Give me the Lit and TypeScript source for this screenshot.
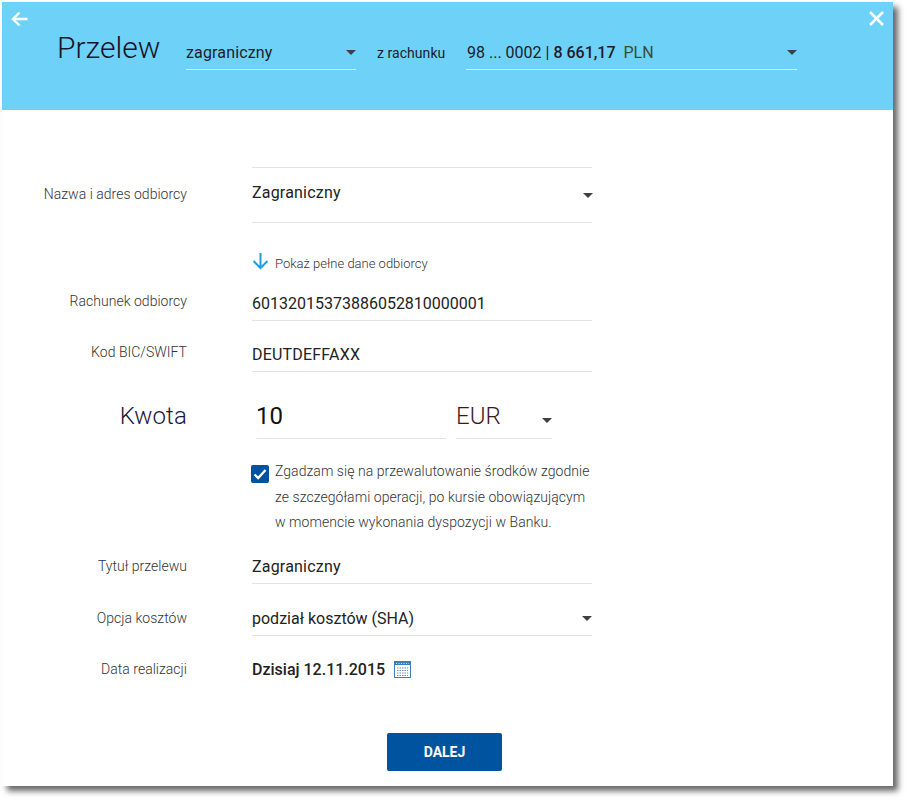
import { LitElement, html, css } from "lit";
import { customElement } from "lit/decorators.js";

const caret = html`<svg class="caret" width="10" height="5" viewBox="0 0 10 5"><path d="M0 0H10L5 5Z" fill="#3f3f46"/></svg>`;

@customElement("app-root")
export class AppRoot extends LitElement {
  static styles = css`
    :host { display: block; width: 907px; height: 800px; background: #fff; box-sizing: border-box; padding: 2px 14px 14px 2px; font-family: Roboto, "Noto Sans", sans-serif; color: #1c1c28; }
    * { box-sizing: border-box; }
    .panel { width: 891px; height: 784px; background: #fff; box-shadow: 5px 5px 6px rgba(0,0,0,.6); position: relative; }
    .head { height: 108px; background: #6ed2f8; display: flex; align-items: flex-start; padding: 27px 0 0 55px; position: relative; }
    .back { position: absolute; left: 9px; top: 9px; }
    .close { position: absolute; right: 8px; top: 8px; }
    h1 { margin: 0; font-size: 30px; font-weight: 300; line-height: 38px; width: 129px; color: #14142b; }
    .hsel { height: 41px; border-bottom: 1px solid #e6f6fd; display: flex; align-items: center; justify-content: space-between; font-size: 16px; padding: 7px 0 0 0; letter-spacing: .15px; }
    .kind { width: 170px; }
    .from { font-size: 14px; margin: 0 20px 0 21px; height: 40px; line-height: 48px; width: 69px; white-space: nowrap; letter-spacing: .05px; }
    .acct { width: 331px; padding-left: 1px; letter-spacing: 0; }
    .acct b { font-weight: 500; }
    .acct .cur { margin-left: 4px; color: #3d4a32; }
    .form { display: flex; flex-direction: column; padding-top: 57px; }
    .row { display: grid; grid-template-columns: 185px 340px; column-gap: 65px; }
    .lbl { font-size: 14px; font-weight: 300; color: #333; text-align: right; letter-spacing: .02px; }
    .field { font-size: 16px; border-bottom: 1px solid #e3e3e3; color: #222; }
    .spaced { letter-spacing: .2px; }
    .line { height: 34px; line-height: 33px; display: flex; justify-content: space-between; align-items: center; }
    .recipient { border-top: 1px solid #e3e3e3; height: 56px; display: flex; justify-content: space-between; align-items: center; padding: 0 0 5px 0; }
    .recipient .caret { margin: 5px -1px 0 0; }
    .recipient-lbl { line-height: 54px; }
    .show { display: flex; align-items: center; gap: 6px; font-size: 13px; font-weight: 300; color: #333; margin-top: 28px; height: 24px; }
    .rlbl { line-height: 28px; }
    .rlbl2 { line-height: 33px; }
    .account { margin-top: 12px; }
    .bic { margin-top: 17px; }
    .amount { margin-top: 17px; }
    .amount .big { font-size: 24px; font-weight: 300; color: #17173f; height: 50px; line-height: 54px; letter-spacing: .15px; }
    .amt { display: flex; gap: 10px; padding-left: 4px; }
    .amt > div { height: 50px; border-bottom: 1px solid #e3e3e3; font-size: 24px; line-height: 54px; display: flex; justify-content: space-between; }
    .val { width: 190px; color: #111; }
    .ccy { width: 96px; color: #3a1a1a; font-weight: 300; }
    .ccy .caret { margin-top: 29px; }
    .agree { display: flex; gap: 6px; margin: 20px 0 0 -1px; font-size: 14px; font-weight: 300; line-height: 25.5px; color: #333; letter-spacing: .05px; }
    .agree p { margin: 0; white-space: nowrap; }
    .box { width: 18px; height: 18px; margin-top: 6px; flex: none; background: #00539f; border-radius: 2px; display: flex; align-items: center; justify-content: center; }
    .title { margin-top: 14px; }
    .cost { margin-top: 18px; }
    .date { margin-top: 17px; height: 34px; line-height: 34px; }
    .datev { display: flex; align-items: center; gap: 9px; font-size: 16px; font-weight: 500; color: #222; }
    .date .lbl { line-height: 33px; }
    .foot { display: flex; justify-content: center; margin-top: 46px; padding-right: 6px; }
    button { width: 115px; height: 38px; background: #00539f; color: #fff; border: 0; border-radius: 2px; font: 700 14px Roboto, sans-serif; }
    .arrow { flex: none; margin-top: -4px; }
  `;
  render() {
    return html`<div class="panel">
      <div class="head">
        <svg class="back" width="18" height="16" viewBox="0 0 18 16"><path d="M16.5 8H2M8.5 1.5L2 8l6.5 6.5" fill="none" stroke="#fff" stroke-width="2.4"/></svg>
        <svg class="close" width="17" height="17" viewBox="0 0 17 17"><path d="M2 2l13 13M15 2L2 15" fill="none" stroke="#fff" stroke-width="2.6"/></svg>
        <h1>Przelew</h1>
        <div class="hsel kind"><span>zagraniczny</span>${caret}</div>
        <div class="from">z rachunku</div>
        <div class="hsel acct"><span>98 ... 0002 | <b>8 661,17</b> <span class="cur">PLN</span></span>${caret}</div>
      </div>
      <div class="form">
        <div class="row"><div class="lbl recipient-lbl">Nazwa i adres odbiorcy</div><div class="field recipient"><span class="spaced">Zagraniczny</span>${caret}</div></div>
        <div class="row"><div></div><div class="show">
          <svg class="arrow" width="17" height="18" viewBox="0 0 17 18"><path d="M8.5 1V16M1.5 9l7 7 7-7" fill="none" stroke="#1f9fe0" stroke-width="2"/></svg>
          <span>Pokaż pełne dane odbiorcy</span></div></div>
        <div class="row account"><div class="lbl rlbl">Rachunek odbiorcy</div><div class="field line">60132015373886052810000001</div></div>
        <div class="row bic"><div class="lbl rlbl">Kod BIC/SWIFT</div><div class="field line spaced">DEUTDEFFAXX</div></div>
        <div class="row amount"><div class="lbl big">Kwota</div><div class="amt"><div class="val">10</div><div class="ccy"><span>EUR</span>${caret}</div></div></div>
        <div class="row"><div></div><div class="agree">
          <div class="box"><svg width="14" height="12" viewBox="0 0 14 12"><path d="M1.5 6.5L5.2 10 12.5 2" fill="none" stroke="#fff" stroke-width="2.4"/></svg></div>
          <p>Zgadzam się na przewalutowanie środków zgodnie<br>ze szczegółami operacji, po kursie obowiązującym<br>w momencie wykonania dyspozycji w Banku.</p>
        </div></div>
        <div class="row title"><div class="lbl rlbl2">Tytuł przelewu</div><div class="field line spaced">Zagraniczny</div></div>
        <div class="row cost"><div class="lbl rlbl2">Opcja kosztów</div><div class="field line"><span>podział kosztów (SHA)</span>${caret}</div></div>
        <div class="row date"><div class="lbl">Data realizacji</div><div class="datev"><span>Dzisiaj 12.11.2015</span>
          <svg width="17" height="17" viewBox="0 0 17 17"><rect x=".5" y=".5" width="16" height="16" fill="#fff" stroke="#3c7fb8"/><rect x="1" y="1" width="15" height="3" fill="#3c7fb8"/><path d="M2 2.5h13" stroke="#dcebf5" stroke-dasharray="1 1.5"/><path d="M3 7h11M3 9.5h11M3 12h11M3 14.5h11" stroke="#6b8fae" stroke-dasharray="1.5 1"/></svg></div></div>
        <div class="foot"><button>DALEJ</button></div>
      </div>
    </div>`;
  }
}
